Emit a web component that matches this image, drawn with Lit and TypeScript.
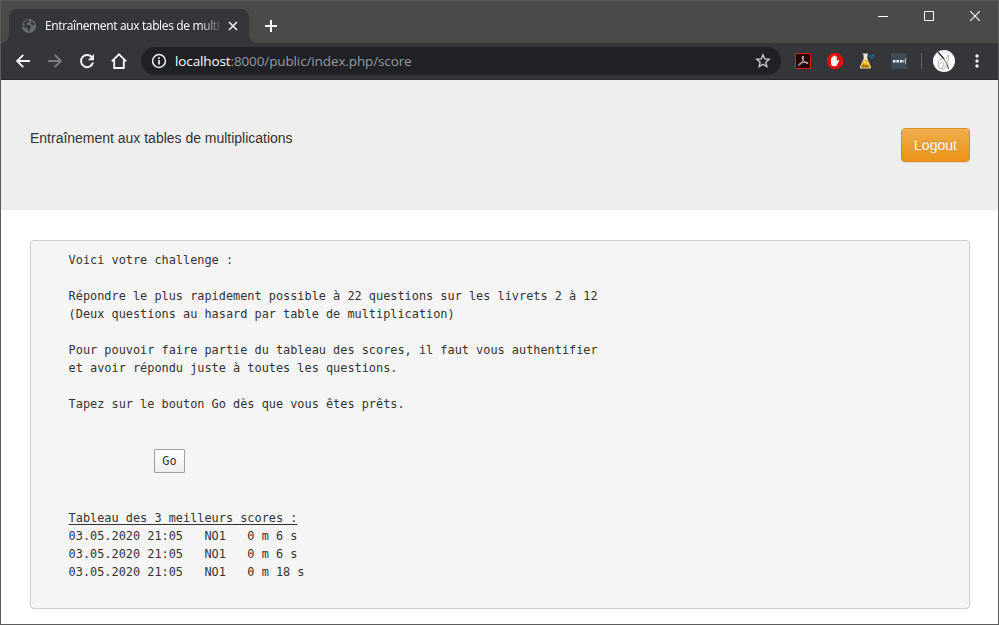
import { LitElement, html, css, svg } from "lit";
import { customElement } from "lit/decorators.js";

const chromeIcons = {
  globe: svg`<circle cx="8" cy="8" r="7" fill="#686b6f"/><path d="M3 4.2 6 2.2 8.6 2.5 7.5 4.2 5.2 5.4 6 6.8 8.8 7.3 10 8.8 9 10.4 8.2 13.4 6.8 12.5 7 10.5 5 9.4 1.8 9 1.5 7.6 4 7.6ZM10.8 3 13.6 6.2 12 7.6 10 6.2 9.8 4.4Z" fill="#35363a"/>`,
  close: svg`<path d="m4 4 8 8M12 4l-8 8" stroke="#f1f1f1" stroke-width="1.6"/>`,
  plus: svg`<path d="M8 2v12M2 8h12" stroke="#fff" stroke-width="2"/>`,
  back: svg`<path d="M15 8H2.2M8.3 1.8 2.1 8l6.2 6.2" fill="none" stroke="#f1f3f4" stroke-width="1.9"/>`,
  forward: svg`<path d="M1 8h12.8M7.7 1.8 13.9 8l-6.2 6.2" fill="none" stroke="#7d7f82" stroke-width="1.9"/>`,
  reload: svg`<path d="M13.1 4.5A6.1 6.1 0 1 0 14 9.6" fill="none" stroke="#f1f3f4" stroke-width="2"/><path d="M15 1v6.2H8.8Z" fill="#f1f3f4"/>`,
  home: svg`<path d="M.8 8.4 8 1.4l7.2 7M3.2 7v8h9.6V7" fill="none" stroke="#f1f3f4" stroke-width="1.9"/>`,
  info: svg`<circle cx="8" cy="8" r="6.4" fill="none" stroke="#f1f3f4" stroke-width="1.5"/><path d="M8 7v4.6M8 4.2v1.7" stroke="#f1f3f4" stroke-width="1.7"/>`,
  star: svg`<path d="m8 1.8 1.75 4.1 4.45.4-3.35 2.95 1 4.35L8 11.3l-3.85 2.3 1-4.35L1.8 6.3l4.45-.4Z" fill="none" stroke="#d0d2d5" stroke-width="1.3"/>`,
  pdf: svg`<path d="M.5.5h15v15H.5Z" fill="#260606" stroke="#d92408"/><path d="M7.5 3.3c1-.8 1.4.7.5 3.2-.8 2.5-3 6-4.2 6-1.3-.4.4-2.2 4-3 3.6-.7 5.8-.2 5.2.8-.7.8-3.1-.8-4.4-2.7-1.1-1.7-1.9-3.6-1.1-4.3Z" fill="none" stroke="#ddd3d1" stroke-width=".9"/>`,
  block: svg`<path d="M4.7 0h6.6L16 4.7v6.6L11.3 16H4.7L0 11.3V4.7Z" fill="#e50c0c"/><path d="M4 5.2q.6-.9 1.3 0V3.700q.7-.9 1.400 0v-.9q.8-.8 1.600 0v.9q.8-.7 1.500.1v4.500l1.300-1.200q1.200-.2 1 .7l-2 4q-.7 1.500-2.200 1.500H7.100Q4.200 13 4 10.500Z" fill="#fff"/>`,
  flask: svg`<path d="M4 .5h5v1.3H8.400v4L12 14q.3 1.600-1 1.600H1.800Q.5 15.500.9 14l3.700-8.200v-4H4Z" fill="#e9e5d5"/><path d="M4.300 7h4.300l3 7.200q.1.800-.8.800H2.300q-1-.1-.7-.9Z" fill="#efb91b"/><path d="m2.300 13 2.200-2 2 1.500 2-1.500 1.500 3.500H2.500Z" fill="#ad741c"/><path d="M5 8h2v2H5Zm3 2h1.500v1.500H8Z" fill="#fff05c"/><path d="M10 2h2.500v2.500H10Zm3-1h2.500v2.500H13Zm-1 3h2v2h-2Z" fill="#12678c"/>`,
  dots: svg`<rect width="16" height="16" rx="1" fill="#3b4b57"/><path d="M2 7h2.400v2.400H2Zm3.500 0h2.400v2.400H5.500ZM9 7h2.400v2.400H9Z" fill="#fff"/><path d="M12.300 7h1v2.400h-1Z" fill="#dce2e6"/><path d="M14.500 5v6" stroke="#a8b3ba"/>`,
  menu: svg`<circle cx="8" cy="3" r="1.7" fill="#f1f3f4"/><circle cx="8" cy="8" r="1.7" fill="#f1f3f4"/><circle cx="8" cy="13" r="1.7" fill="#f1f3f4"/>`,
};

const icon = (name: keyof typeof chromeIcons) =>
  html`<svg class="icon" viewBox="0 0 16 16" width="16" height="16">${chromeIcons[name]}</svg>`;

@customElement("browser-tabs")
class BrowserTabs extends LitElement {
  static styles = css`
    :host { display: flex; height: 42px; background: #4c4a48; }
    .tab { box-sizing: border-box; position: relative; display: flex; align-items: center; width: 240px; height: 34px; margin: 8px 0 0 8px; padding: 0 8px 0 12px; border-radius: 8px 8px 0 0; background: #35363a; }
    .tab::before, .tab::after { content: ""; position: absolute; bottom: 0; width: 8px; height: 8px; }
    .tab::before { left: -8px; background: radial-gradient(circle at 0 0, transparent 7.5px, #35363a 8px); }
    .tab::after { right: -8px; background: radial-gradient(circle at 100% 0, transparent 7.5px, #35363a 8px); }
    .title { width: 176px; margin-left: 8px; white-space: nowrap; font: 12px/18px "Open Sans", "Noto Sans", sans-serif; letter-spacing: -0.36px; color: #fff; mask-image: linear-gradient(90deg, #000 154px, transparent 180px); }
    .icon { flex: none; display: block; }
    .close { margin-left: 4px; }
    .plus { margin: 17px 0 0 14px; }
    .controls { display: flex; margin-left: auto; }
    .control { display: flex; width: 46px; height: 29px; align-items: center; justify-content: center; }
  `;
  render() {
    return html`
      <div class="tab">${icon("globe")}<div class="title">Entraînement aux tables de multi</div><div class="close">${icon("close")}</div></div>
      <div class="plus">${icon("plus")}</div>
      <div class="controls">
        <div class="control"><svg width="10" height="10"><path d="M0 5.5h10" stroke="#fff"/></svg></div>
        <div class="control"><svg width="10" height="10"><path d="M.5.5h9v9h-9Z" fill="none" stroke="#fff"/></svg></div>
        <div class="control"><svg width="10" height="10"><path d="m0 0 10 10M10 0 0 10" stroke="#fff" stroke-width="1.1"/></svg></div>
      </div>`;
  }
}

@customElement("browser-toolbar")
class BrowserToolbar extends LitElement {
  static styles = css`
    :host { box-sizing: border-box; display: flex; align-items: center; height: 37px; padding: 0 13px 0 14px; background: #35363a; border-bottom: 1px solid #29292c; }
    .icon { flex: none; display: block; }
    .nav { display: flex; gap: 16px; }
    .address { box-sizing: border-box; flex: none; display: flex; align-items: center; width: 640px; height: 28px; margin-left: 14px; padding: 0 10px; border-radius: 14px; background: #202124; }
    .url { margin: 0 auto 0 8px; font: 13.5px/20px "Open Sans", "Noto Sans", sans-serif; letter-spacing: -0.12px; color: #999b9e; white-space: nowrap; }
    .host { color: #fff; }
    .extensions { display: flex; gap: 16px; margin-left: 14px; }
    .divider { flex: none; width: 1px; height: 16px; margin-left: 14px; background: #626467; }
    .avatar { flex: none; margin-left: 11px; }
    .menu { margin-left: 14px; }
  `;
  render() {
    return html`
      <div class="nav">${icon("back")}${icon("forward")}${icon("reload")}${icon("home")}</div>
      <div class="address">${icon("info")}<div class="url"><span class="host">localhost</span>:8000/public/index.php/score</div>${icon("star")}</div>
      <div class="extensions">${icon("pdf")}${icon("block")}${icon("flask")}${icon("dots")}</div>
      <div class="divider"></div>
      <svg class="avatar" width="22" height="22" viewBox="0 0 22 22"><circle cx="11" cy="11" r="11" fill="#fafafa"/><path d="M5 2l3 3.500 3 3.500" fill="none" stroke="#242424" stroke-width="1.300"/><path d="m11 9 3 5 1.500 5" fill="none" stroke="#444" stroke-width="1"/><path d="M5 15q0-5 4-7 3 1 5 6-1 5-5 5-4 0-4-4Zm2-1q2-4 4 0 0 3-2 4M13 9l2-4 1 4-2 4" fill="none" stroke="#aaa" stroke-width=".900"/></svg>
      <div class="menu">${icon("menu")}</div>`;
  }
}

@customElement("app-root")
class AppRoot extends LitElement {
  static styles = css`
    :host { box-sizing: border-box; display: block; width: 999px; height: 625px; overflow: hidden; border: 1px solid #5b5b5b; background: #fff; color: #333; font: 14px/20px "Liberation Sans", Arial, sans-serif; }
    .hero { box-sizing: border-box; display: flex; justify-content: space-between; align-items: flex-start; height: 130px; padding: 48px 28px 0 29px; background: #eee; }
    .name { letter-spacing: -0.01px; }
    .logout { box-sizing: border-box; width: 69px; height: 34px; padding: 0; border: 1px solid #df8a13; border-radius: 4px; background: linear-gradient(#f0ad4e, #eb9316); box-shadow: inset 0 1px 0 rgba(255,255,255,.15), 0 1px 1px rgba(0,0,0,.075); color: #fff; font: inherit; text-shadow: 0 -1px 0 rgba(0,0,0,.2); }
    .panel { box-sizing: border-box; height: 369px; margin: 30px 28px 0 29px; padding: 10px 0 0 37.6px; border: 1px solid #ccc; border-radius: 4px; background: #f5f5f5; font: 11.88px/18px "DejaVu Sans Mono", monospace; }
    pre { margin: 0; font: inherit; }
    .go { display: block; box-sizing: border-box; width: 31px; height: 24px; margin: 36px 0 36px 85.4px; padding: 0; border: 1px solid #a0a0a0; border-radius: 1px; background: linear-gradient(#fff, #eee); color: #333; font: inherit; }
    .heading { text-decoration: underline; text-underline-offset: 2px; text-decoration-thickness: 1px; text-decoration-skip-ink: none; }
  `;
  private scores = [["03.05.2020 21:05", "NO1", "0 m 6 s"], ["03.05.2020 21:05", "NO1", "0 m 6 s"], ["03.05.2020 21:05", "NO1", "0 m 18 s"]];
  private challenge = [
    "Voici votre challenge :", "",
    "Répondre le plus rapidement possible à 22 questions sur les livrets 2 à 12",
    "(Deux questions au hasard par table de multiplication)", "",
    "Pour pouvoir faire partie du tableau des scores, il faut vous authentifier",
    "et avoir répondu juste à toutes les questions.", "",
    "Tapez sur le bouton Go dès que vous êtes prêts.",
  ].join("\n");
  render() {
    return html`
      <browser-tabs></browser-tabs>
      <browser-toolbar></browser-toolbar>
      <header class="hero"><span class="name">Entraînement aux tables de multiplications</span><button class="logout">Logout</button></header>
      <main class="panel">
        <pre>${this.challenge}</pre>
        <button class="go">Go</button>
        <pre><span class="heading">Tableau des 3 meilleurs scores :</span></pre>
        ${this.scores.map((row) => html`<pre>${row.join("   ")}</pre>`)}
      </main>`;
  }
}
